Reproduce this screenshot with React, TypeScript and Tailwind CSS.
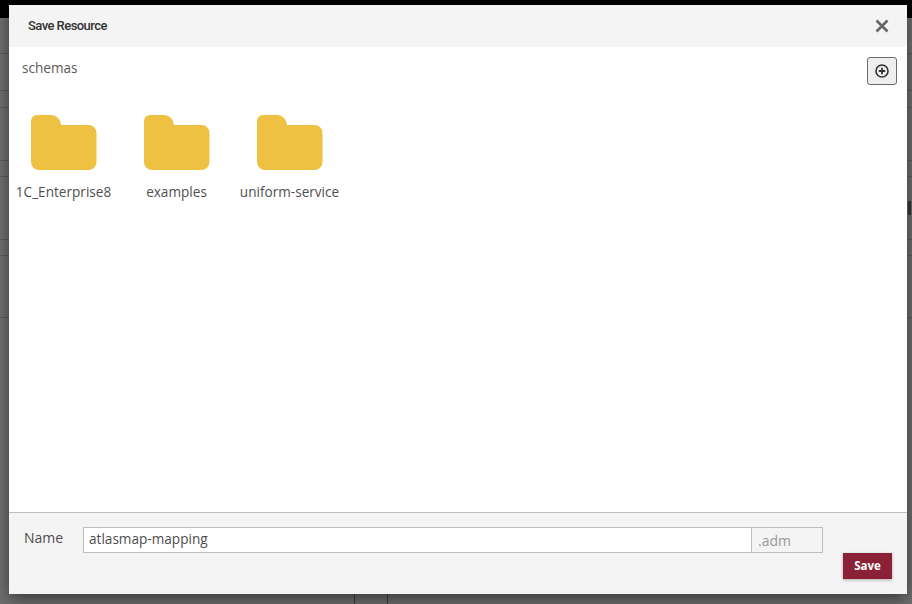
import React from "react";

const lineRows = [54, 37, 17, 53, 16, 63, 16, 62];

function Folder() {
  return (
    <svg width="66" height="55" viewBox="0 0 66 55" className="block">
      <path
        d="M6 0H20a10 10 0 0 1 10 10H57.5a8 8 0 0 1 8 8V47a8 8 0 0 1-8 8H8a8 8 0 0 1-8-8V6a6 6 0 0 1 6-6Z"
        fill="#eec142"
      />
    </svg>
  );
}

function FolderItem({ name }: { name: string }) {
  return (
    <div className="flex w-[95px] flex-col items-center">
      <Folder />
      <span className="mt-[12px] text-[13.6px] leading-[20px] text-[#505050] whitespace-nowrap">{name}</span>
    </div>
  );
}

export default function App() {
  return (
    <div className="relative h-[604px] w-[912px] overflow-hidden bg-[#707070] font-['Open_Sans',sans-serif]">
      <div className="absolute left-0 top-0 h-[18px] w-full bg-black" />
      <div className="flex flex-col">
        {lineRows.map((h, i) => (
          <div key={i} className="border-b border-[#5e5e5e]" style={{ height: h }} />
        ))}
      </div>
      <div className="absolute bottom-0 left-[354px] h-[12px] w-[34px] border-x border-[#3f3f3f]" />
      <div className="absolute left-[908px] top-[201px] h-[14px] w-[3px] bg-[#3a3a3a]" />
      <div className="absolute left-[9px] top-[5px] flex h-[589px] w-[898px] flex-col bg-white shadow-[0_5px_15px_rgba(0,0,0,0.5)]">
        <header className="flex h-[42px] shrink-0 items-center justify-between bg-[#f4f4f4] pl-[19px] pr-[18px]">
          <h1 className="font-['Roboto',sans-serif] text-[13px] font-medium tracking-[-0.55px] text-[#333333]">Save Resource</h1>
          <svg width="14" height="14" viewBox="0 0 14 14">
            <path d="M1.5 1.5 12.5 12.5M12.5 1.5 1.5 12.5" stroke="#666666" strokeWidth="2.6" fill="none" />
          </svg>
        </header>
        <main className="min-h-0 flex-1 pl-[7px] pr-[10px]">
          <div className="flex justify-between pt-[9px]">
            <span className="pl-[6px] text-[13.6px] leading-[24px] text-[#5a5a5a]">schemas</span>
            <button className="mt-[1px] flex h-[28px] w-[30px] items-center justify-center rounded-[3px] border border-[#6b6b6b] bg-[#eeeeee]">
              <svg width="14" height="14" viewBox="0 0 14 14">
                <circle cx="7" cy="7" r="6" stroke="#333333" strokeWidth="1.6" fill="none" />
                <path d="M7 3.8V10.2M3.8 7H10.2" stroke="#333333" strokeWidth="1.8" />
              </svg>
            </button>
          </div>
          <div className="mt-[30px] flex gap-[18px]">
            <FolderItem name="1C_Enterprise8" />
            <FolderItem name="examples" />
            <FolderItem name="uniform-service" />
          </div>
        </main>
        <footer className="h-[82px] shrink-0 border-t border-[#bdbdbd] bg-[#f4f4f4] px-[15px]">
          <div className="flex pt-[14px]">
            <label className="w-[59px] pt-[1px] text-[14px] font-medium leading-[20px] text-[#4d4d4d]">Name</label>
            <div className="flex h-[26px] w-[740px]">
              <div className="flex w-[670px] items-center border border-[#bdbdbd] bg-white pb-[1px] pl-[5px] text-[13.6px] text-[#4d4d4d]">atlasmap-mapping</div>
              <div className="flex w-[71px] items-center border border-l-0 border-[#bdbdbd] pl-[6px] text-[14px] text-[#999999]">.adm</div>
            </div>
          </div>
          <div className="flex justify-end">
            <button className="h-[26px] w-[49px] bg-[#8b2136] text-[11.5px] font-bold text-white shadow-[0_1px_3px_rgba(0,0,0,0.3)]">Save</button>
          </div>
        </footer>
      </div>
    </div>
  );
}
